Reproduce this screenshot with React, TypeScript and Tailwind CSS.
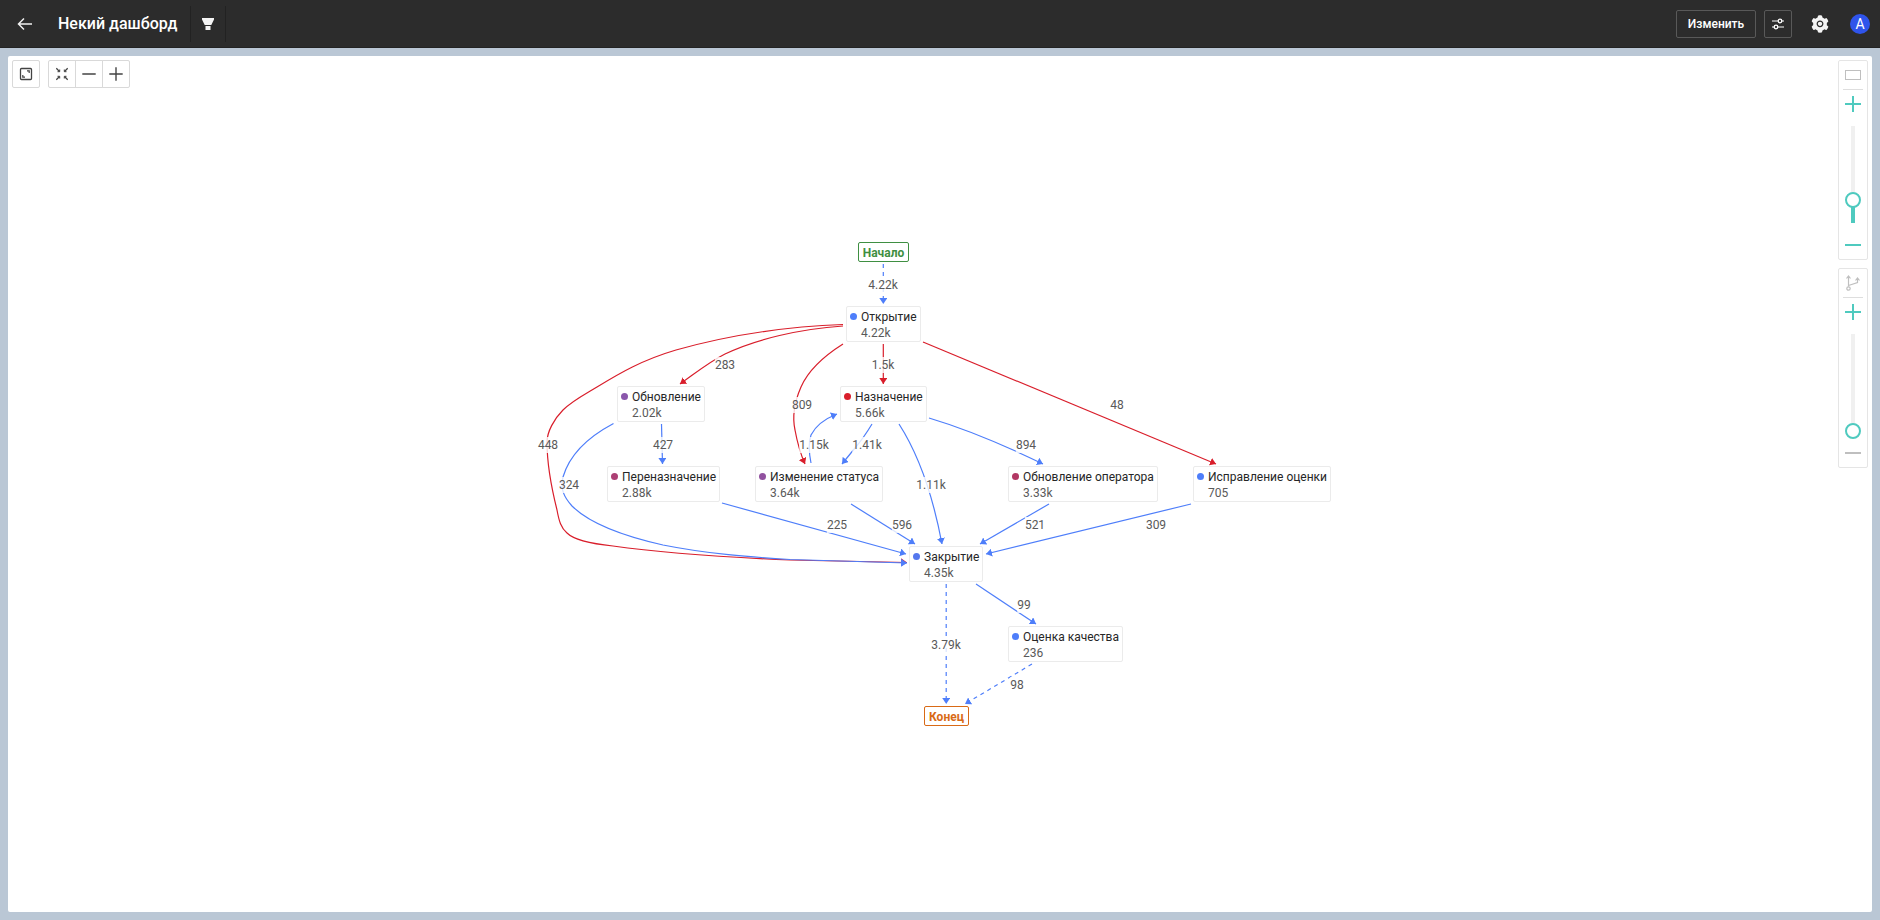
import { useState, type ReactNode } from 'react';
import { AiFillSetting } from 'react-icons/ai';

const BLUE = '#4e7efa';
const RED = '#d91e2b';
const CANVAS_LEFT = 540;
const CANVAS_TOP = 234;

type GraphNode = { x: number; y: number; w: string; title: string; count: string; dot: string };

const nodes: GraphNode[] = [
  { x: 846, y: 306, w: 'w-[75px]', title: 'Открытие', count: '4.22k', dot: 'bg-[#4e7efa]' },
  { x: 617, y: 386, w: 'w-[88px]', title: 'Обновление', count: '2.02k', dot: 'bg-[#8a57ab]' },
  { x: 840, y: 386, w: 'w-[87px]', title: 'Назначение', count: '5.66k', dot: 'bg-[#d91e2b]' },
  { x: 607, y: 466, w: 'w-[113px]', title: 'Переназначение', count: '2.88k', dot: 'bg-[#ac3f74]' },
  { x: 755, y: 466, w: 'w-[128px]', title: 'Изменение статуса', count: '3.64k', dot: 'bg-[#91519f]' },
  { x: 1008, y: 466, w: 'w-[150px]', title: 'Обновление оператора', count: '3.33k', dot: 'bg-[#b23763]' },
  { x: 1193, y: 466, w: 'w-[138px]', title: 'Исправление оценки', count: '705', dot: 'bg-[#4e7efa]' },
  { x: 909, y: 546, w: 'w-[74px]', title: 'Закрытие', count: '4.35k', dot: 'bg-[#5578ee]' },
  { x: 1008, y: 626, w: 'w-[115px]', title: 'Оценка качества', count: '236', dot: 'bg-[#4e7efa]' },
];

type Edge = { d: string; red?: boolean; dashed?: boolean; label: string; x: number; y: number };

const edges: Edge[] = [
  { d: 'M883.3 264V304', dashed: true, label: '4.22k', x: 883, y: 285 },
  { d: 'M843 324.5C775 327 722 337 676 350C642 360 620 373 597 387C582 396 572 401 563 410C554 419 547 432 547 442C547 462 552 490 557 510C559 521 561 528 567 533C575 541 594 544 613 546C655 552 720 557 790 560L907 562.500', red: true, label: '448', x: 548, y: 445 },
  { d: 'M843 326C800 329 756 339 725 354C709 362 697 372 680 384', red: true, label: '283', x: 725, y: 365 },
  { d: 'M843 344C824 356 808 371 801 387C794 403 792 416 795 430C797 441 801 455 805 464', red: true, label: '809', x: 802, y: 405 },
  { d: 'M883.3 344V384', red: true, label: '1.5k', x: 883, y: 365 },
  { d: 'M923 342L1216 464', red: true, label: '48', x: 1117, y: 405 },
  { d: 'M613.5 423.5C590 436 570 453 563 477C560 489 564 497 572 506C592 526 632 538 663 545C708 554 750 557 790 559.500L907 563', label: '324', x: 569, y: 485 },
  { d: 'M661.5 424L662.5 464', label: '427', x: 663, y: 445 },
  { d: 'M811 463C808 448 809 441 811 435C815 427 822 420 837 414', label: '1.15k', x: 814, y: 445 },
  { d: 'M872 424C866 434 861 441 855 448L842 464', label: '1.41k', x: 867, y: 445 },
  { d: 'M899 424C917 452 932 491 942 544', label: '1.11k', x: 931, y: 485 },
  { d: 'M929 418C966 429 1004 445 1043 464', label: '894', x: 1026, y: 445 },
  { d: 'M722 503L906 554', label: '225', x: 837, y: 525 },
  { d: 'M851 504L915 544', label: '596', x: 902, y: 525 },
  { d: 'M1049 504L980 544', label: '521', x: 1035, y: 525 },
  { d: 'M1191 504L986 554', label: '309', x: 1156, y: 525 },
  { d: 'M976 584L1036 624', label: '99', x: 1024, y: 605 },
  { d: 'M946.2 584V704', dashed: true, label: '3.79k', x: 946, y: 645 },
  { d: 'M1032 664L965 704', dashed: true, label: '98', x: 1017, y: 685 },
];

function ToolButton({ label, className = '', children }: { label: string; className?: string; children: ReactNode }) {
  return (
    <button
      type="button"
      aria-label={label}
      className={`flex size-7 items-center justify-center border border-[#d9d9d9] bg-white text-[#434343] ${className}`}
    >
      {children}
    </button>
  );
}

function Header() {
  return (
    <header className="flex h-12 items-center border-b border-[#232323] bg-[#2c2c2c] text-white">
      <a href="#back" aria-label="Назад" className="ml-[11px] flex size-7 items-center justify-center text-[#f0f0f0]">
        <svg width="16" height="16" viewBox="0 0 16 16" fill="none" stroke="currentColor" strokeWidth="1.5" aria-hidden="true">
          <path d="M15 8H1.5M7 2.500L1.500 8L7 13.500" />
        </svg>
      </a>
      <h1 className="ml-[19px] text-base font-medium">Некий дашборд</h1>
      <button type="button" aria-label="Фильтр" className="ml-[13px] flex h-9 w-9 items-center justify-center border-x border-[#222222]">
        <svg width="14" height="14" viewBox="0 0 14 14" fill="#f5f5f5" aria-hidden="true">
          <path d="M1 1H13V2.500L10.300 8H3.700L1 2.500ZM4.500 9H9.500V13H4.500Z" />
        </svg>
      </button>
      <div className="ml-auto flex items-center">
        <button type="button" className="h-7 w-20 rounded-xs border border-[#595959] text-xs font-medium">
          Изменить
        </button>
        <button type="button" aria-label="Параметры" className="ml-2 flex size-7 items-center justify-center rounded-xs border border-[#595959]">
          <svg width="14" height="14" viewBox="0 0 14 14" fill="none" stroke="currentColor" aria-hidden="true">
            <path d="M1 4H7M11 4H13M1 10H3M7 10H13" />
            <circle cx="9" cy="4" r="1.800" strokeWidth="1.300" />
            <circle cx="5" cy="10" r="1.800" strokeWidth="1.300" />
          </svg>
        </button>
        <button type="button" aria-label="Настройки" className="ml-[18px] text-[#f5f5f5]">
          <AiFillSetting size={20} />
        </button>
        <button type="button" aria-label="Профиль" className="mr-2.5 ml-5 flex size-5 items-center justify-center rounded-full bg-[#2f54eb] text-sm">
          A
        </button>
      </div>
    </header>
  );
}

function Toolbar() {
  return (
    <div className="flex gap-2">
      <ToolButton label="На весь экран" className="rounded-xs">
        <svg width="14" height="14" viewBox="0 0 14 14" fill="none" stroke="currentColor" aria-hidden="true">
          <rect x="1.500" y="1.500" width="11" height="11" rx="1" strokeWidth="1.300" />
          <path d="M8 3.800H10.200V6M3.800 8V10.200H6" strokeWidth="1.200" />
        </svg>
      </ToolButton>
      <div className="flex">
        <ToolButton label="Вписать" className="rounded-l-xs">
          <svg width="14" height="14" viewBox="0 0 14 14" fill="none" stroke="currentColor" aria-hidden="true">
            <path d="M1.300 1.300L4.500 4.500M12.700 1.300L9.500 4.500M1.300 12.700L4.500 9.500M12.700 12.700L9.500 9.500" strokeWidth="1.300" />
            <path d="M2.500 4.700H4.700V2.500M11.500 4.700H9.300V2.500M2.500 9.300H4.700V11.500M11.500 9.300H9.300V11.500" />
          </svg>
        </ToolButton>
        <ToolButton label="Уменьшить" className="-ml-px">
          <svg width="14" height="14" viewBox="0 0 14 14" stroke="currentColor" strokeWidth="1.400" aria-hidden="true">
            <path d="M0.300 7H13.700" />
          </svg>
        </ToolButton>
        <ToolButton label="Увеличить" className="-ml-px rounded-r-xs">
          <svg width="14" height="14" viewBox="0 0 14 14" stroke="currentColor" strokeWidth="1.400" aria-hidden="true">
            <path d="M0.300 7H13.700M7 0.300V13.700" />
          </svg>
        </ToolButton>
      </div>
    </div>
  );
}

function LevelSlider({ label, initial, icon }: { label: string; initial: number; icon: ReactNode }) {
  const [value, setValue] = useState(initial);
  return (
    <div className="flex h-[200px] w-[30px] flex-col items-center rounded-xs border border-[#e5e5e5] bg-white text-[#4fcabf]">
      <div className="flex h-7 items-center text-[#bfbfbf]">{icon}</div>
      <div className="h-px w-5 bg-[#dedede]" />
      <button type="button" aria-label={`${label}: больше`} className="flex h-7 w-7 items-center justify-center">
        <svg width="16" height="16" viewBox="0 0 16 16" stroke="currentColor" strokeWidth="2" aria-hidden="true">
          <path d="M0 8H16M8 0V16" />
        </svg>
      </button>
      <input
        type="range"
        min={0}
        max={100}
        value={value}
        aria-label={label}
        onChange={(e) => setValue(Number(e.target.value))}
        className="h-[113px] w-4 appearance-none bg-transparent bg-[length:4px_97px] bg-center bg-no-repeat [direction:rtl] [writing-mode:vertical-lr] [&::-webkit-slider-thumb]:size-4 [&::-webkit-slider-thumb]:appearance-none [&::-webkit-slider-thumb]:rounded-full [&::-webkit-slider-thumb]:border-2 [&::-webkit-slider-thumb]:border-solid [&::-webkit-slider-thumb]:border-[#4fcabf] [&::-webkit-slider-thumb]:bg-white"
        style={{ backgroundImage: `linear-gradient(to top, #4fcabf ${value}%, #f0f0f0 ${value}%)` }}
      />
      <button
        type="button"
        aria-label={`${label}: меньше`}
        className={`flex h-7 w-7 items-center justify-center ${value === 0 ? 'text-[#bfbfbf]' : ''}`}
      >
        <svg width="16" height="16" viewBox="0 0 16 16" stroke="currentColor" strokeWidth="2" aria-hidden="true">
          <path d="M0 8H16" />
        </svg>
      </button>
    </div>
  );
}

function ProcessGraph() {
  return (
    <div className="relative h-[500px] w-[800px] shrink-0 text-xs leading-4">
      <svg className="absolute inset-0" width="800" height="500" viewBox={`${CANVAS_LEFT} ${CANVAS_TOP} 800 500`} fill="none" aria-hidden="true">
        <defs>
          <marker id="arrow-blue" markerUnits="userSpaceOnUse" markerWidth="6" markerHeight="8" refX="6" refY="4" orient="auto">
            <path d="M0 0L6 4L0 8Z" fill={BLUE} />
          </marker>
          <marker id="arrow-red" markerUnits="userSpaceOnUse" markerWidth="6" markerHeight="8" refX="6" refY="4" orient="auto">
            <path d="M0 0L6 4L0 8Z" fill={RED} />
          </marker>
        </defs>
        {edges.map((e) => (
          <path
            key={e.label + e.x}
            d={e.d}
            stroke={e.red ? RED : BLUE}
            strokeWidth="1.200"
            strokeDasharray={e.dashed ? '4 4' : undefined}
            markerEnd={e.red ? 'url(#arrow-red)' : 'url(#arrow-blue)'}
          />
        ))}
      </svg>
      {edges.map((e) => (
        <span
          key={e.label + e.x}
          className="absolute -translate-x-1/2 -translate-y-1/2 bg-white/80 text-[#595959]"
          style={{ left: e.x - CANVAS_LEFT, top: e.y - CANVAS_TOP }}
        >
          {e.label}
        </span>
      ))}
      <div className="absolute top-2 left-[318px] flex h-5 w-[51px] items-center justify-center rounded-xs border border-[#3f8f42] bg-white pt-px font-bold text-[#3f8f42]">
        Начало
      </div>
      {nodes.map((n) => (
        <div
          key={n.title}
          className={`absolute flex h-9 gap-1 rounded-xs border border-[#ebebeb] bg-white pt-0.5 pl-[3px] whitespace-nowrap ${n.w}`}
          style={{ left: n.x - CANVAS_LEFT, top: n.y - CANVAS_TOP }}
        >
          <span className={`mt-1 size-[7px] shrink-0 rounded-full ${n.dot}`} />
          <div>
            <p className="text-[#262626]">{n.title}</p>
            <p className="text-[#595959]">{n.count}</p>
          </div>
        </div>
      ))}
      <div className="absolute top-[472px] left-[384px] flex h-5 w-[45px] items-center justify-center rounded-xs border border-[#d96a16] bg-white pt-px font-bold text-[#d96a16]">
        Конец
      </div>
    </div>
  );
}

export default function App() {
  return (
    <div className="flex min-h-screen flex-col bg-[#bac7d5] font-['Roboto',sans-serif]">
      <Header />
      <main className="relative m-2 flex flex-1 items-center justify-center overflow-hidden rounded-xs bg-white">
        <ProcessGraph />
        <div className="absolute top-1 left-1">
          <Toolbar />
        </div>
        <div className="absolute top-1 right-1 flex flex-col gap-2">
          <LevelSlider
            label="Детализация событий"
            initial={24}
            icon={
              <svg width="16" height="10" viewBox="0 0 16 10" fill="none" stroke="currentColor" aria-hidden="true">
                <rect x="0.500" y="0.500" width="15" height="9" />
              </svg>
            }
          />
          <LevelSlider
            label="Детализация переходов"
            initial={0}
            icon={
              <svg width="14" height="16" viewBox="0 0 14 16" fill="none" stroke="currentColor" strokeWidth="1.200" aria-hidden="true">
                <circle cx="2.500" cy="13.500" r="1.700" />
                <path d="M2.500 11.500V1M0.500 3.500L2.500 1L4.500 3.500M2.500 10.500L11.500 7.500V3M9.500 5.500L11.500 3L13.500 5.500" />
              </svg>
            }
          />
        </div>
      </main>
    </div>
  );
}
